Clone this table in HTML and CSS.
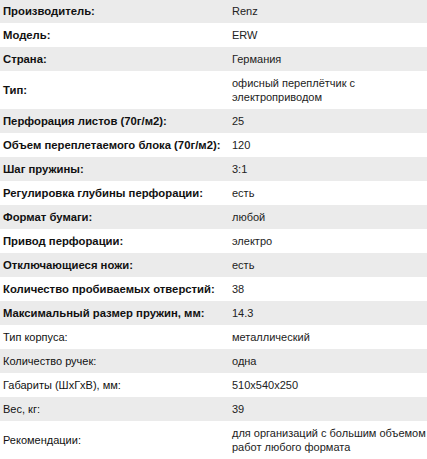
FILE: index.html
```html
<!DOCTYPE html>
<html lang="ru">
<head>
<meta charset="utf-8">
<link rel="stylesheet" href="styles.css">
</head>
<body>
<table class="specs">
<colgroup><col class="c-label"><col class="c-value"></colgroup>
<tbody>
<tr class="odd first"><td class="lbl b">Производитель:</td><td class="val">Renz</td></tr>
<tr><td class="lbl b">Модель:</td><td class="val">ERW</td></tr>
<tr class="odd"><td class="lbl b">Страна:</td><td class="val">Германия</td></tr>
<tr><td class="lbl b">Тип:</td><td class="val">офисный переплётчик с электроприводом</td></tr>
<tr class="odd"><td class="lbl b">Перфорация листов (70г/м2):</td><td class="val">25</td></tr>
<tr><td class="lbl b">Объем переплетаемого блока (70г/м2):</td><td class="val">120</td></tr>
<tr class="odd"><td class="lbl b">Шаг пружины:</td><td class="val">3:1</td></tr>
<tr><td class="lbl b">Регулировка глубины перфорации:</td><td class="val">есть</td></tr>
<tr class="odd"><td class="lbl b">Формат бумаги:</td><td class="val">любой</td></tr>
<tr><td class="lbl b">Привод перфорации:</td><td class="val">электро</td></tr>
<tr class="odd"><td class="lbl b">Отключающиеся ножи:</td><td class="val">есть</td></tr>
<tr><td class="lbl b">Количество пробиваемых отверстий:</td><td class="val">38</td></tr>
<tr class="odd"><td class="lbl b">Максимальный размер пружин, мм:</td><td class="val">14.3</td></tr>
<tr><td class="lbl">Тип корпуса:</td><td class="val">металлический</td></tr>
<tr class="odd"><td class="lbl">Количество ручек:</td><td class="val">одна</td></tr>
<tr><td class="lbl">Габариты (ШхГхВ), мм:</td><td class="val">510x540x250</td></tr>
<tr class="odd"><td class="lbl">Вес, кг:</td><td class="val">39</td></tr>
<tr><td class="lbl">Рекомендации:</td><td class="val">для организаций с большим объемом работ любого формата</td></tr>
</tbody>
</table>
</body>
</html>
```
FILE: styles.css
```css
html, body {
  margin: 0;
  padding: 0;
  background: #fff;
}
.specs {
  width: 427px;
  border-collapse: collapse;
  border-spacing: 0;
  table-layout: fixed;
  font-family: "Liberation Sans", Arial, sans-serif;
  font-size: 11px;
  line-height: 14px;
  color: #111;
}
.c-label { width: 229px; }
.c-value { width: 198px; }
.specs td {
  padding: 5px 3px;
  vertical-align: middle;
}
.specs td.val {
  padding-right: 0;
}
.specs tr.first td {
  padding-top: 4px;
}
.specs tr.odd td {
  background: #ebebeb;
}
.lbl { white-space: nowrap; }
.b {
  font-weight: bold;
  font-size: 11.3px;
}
.val { color: #222; }
```
